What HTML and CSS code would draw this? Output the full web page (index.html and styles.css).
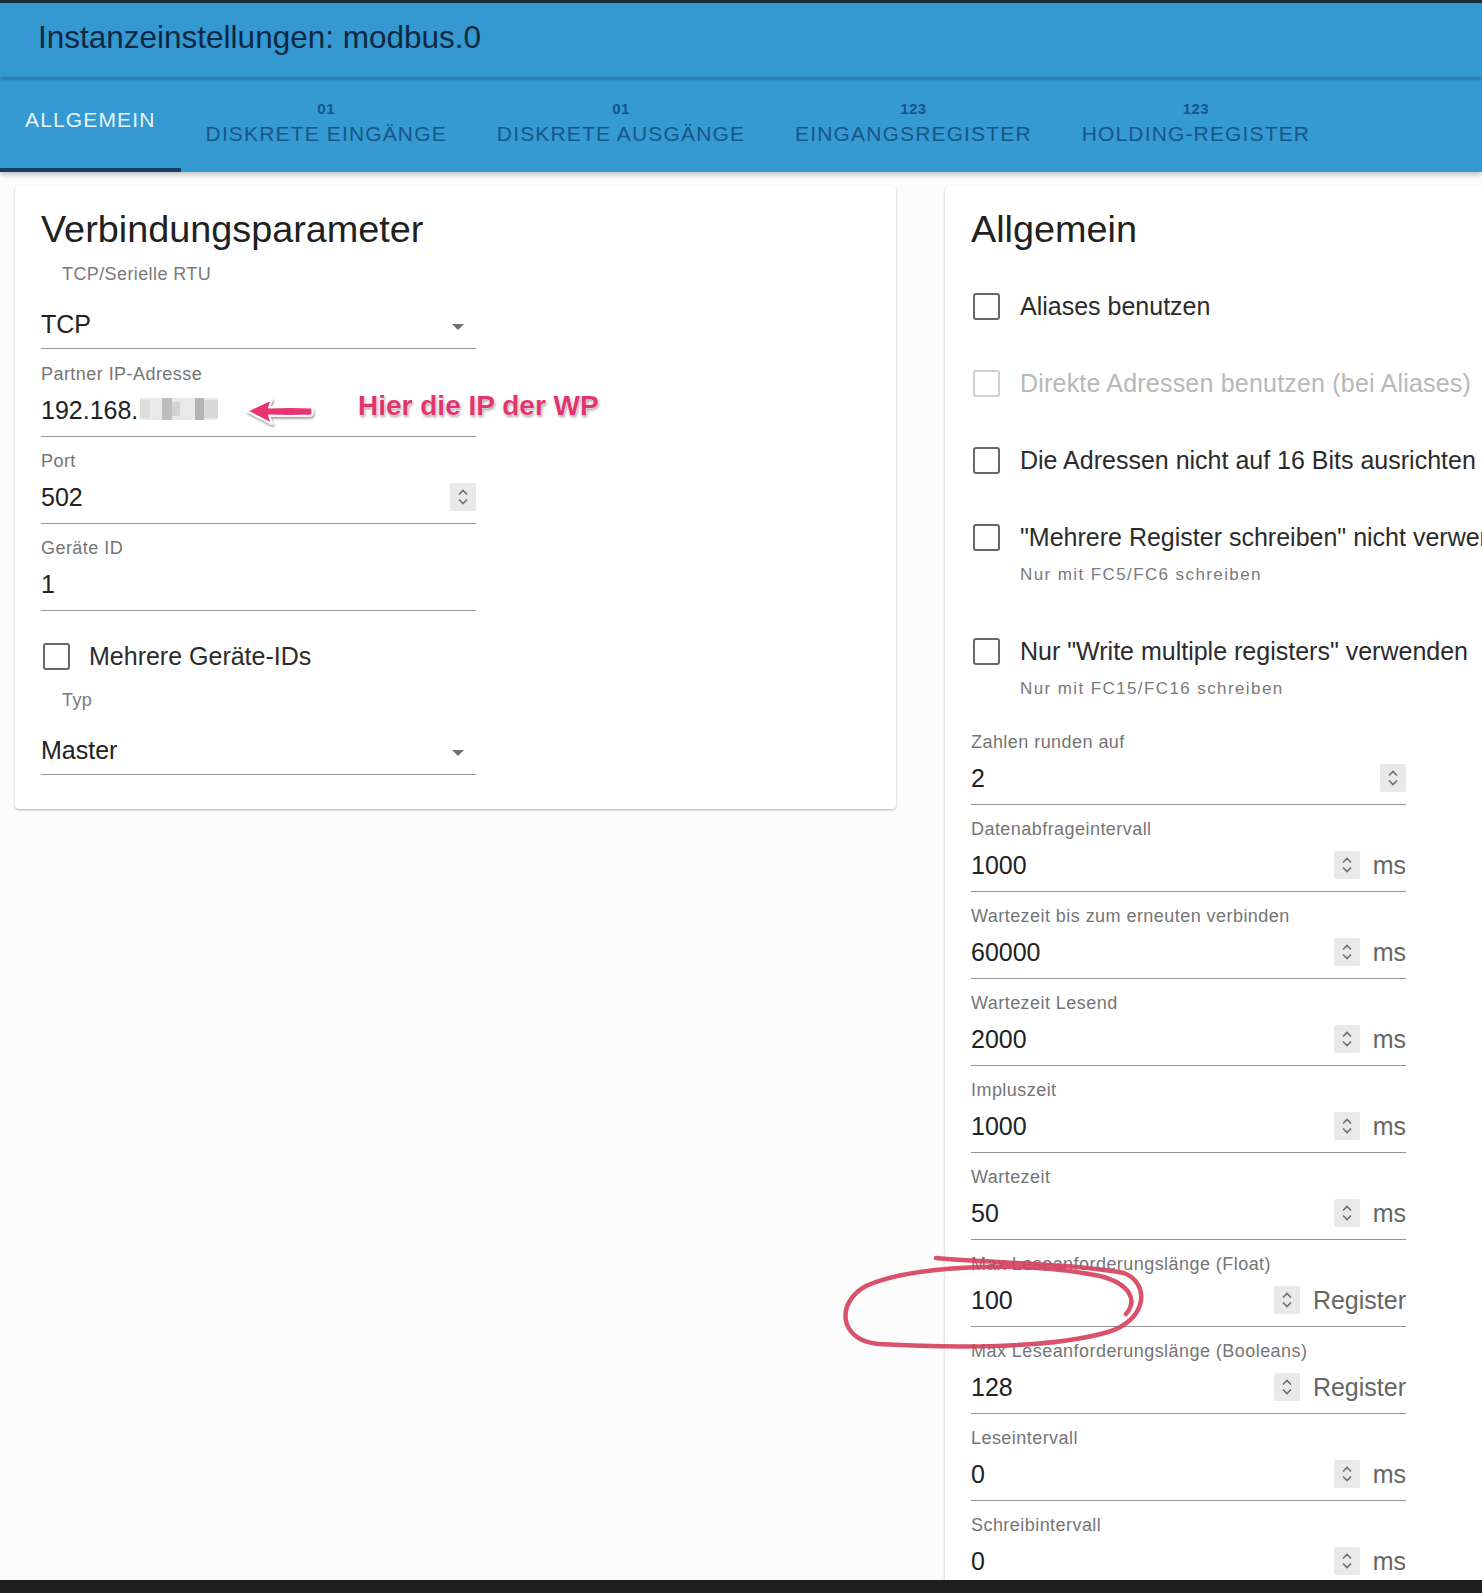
FILE: index.html
```html
<!DOCTYPE html>
<html lang="de">
<head>
<meta charset="utf-8">
<title>Instanzeinstellungen: modbus.0</title>
<link rel="stylesheet" href="styles.css">
</head>
<body>
<div class="topstrip"></div>
<header class="appbar"><h1 class="appbar-title">Instanzeinstellungen: modbus.0</h1></header>
<nav class="tabs">
  <div class="tab tab-active"><span class="tab-label">Allgemein</span></div>
  <div class="tab"><span class="tab-icon">01</span><span class="tab-label">Diskrete Eingänge</span></div>
  <div class="tab"><span class="tab-icon">01</span><span class="tab-label">Diskrete Ausgänge</span></div>
  <div class="tab"><span class="tab-icon">123</span><span class="tab-label">Eingangsregister</span></div>
  <div class="tab"><span class="tab-icon">123</span><span class="tab-label">Holding-Register</span></div>
</nav>
<main class="content">
  <section class="card">
    <h2 class="card-title">Verbindungsparameter</h2>
    <div class="select-field first">
      <div class="select-label">TCP/Serielle RTU</div>
      <div class="select-input"><span class="value">TCP</span><span class="caret"></span></div>
    </div>
    <div class="field">
      <div class="field-label">Partner IP-Adresse</div>
      <div class="field-input"><span class="value ip">192.168.</span><svg class="blurred" width="78" height="22" viewBox="0 0 78 22"><rect x="0" y="0" width="78" height="22" fill="#e9e9e9"/><rect x="0" y="2" width="10" height="18" fill="#dcdcdc"/><rect x="22" y="0" width="10" height="22" fill="#bdbdbd"/><rect x="32" y="4" width="8" height="14" fill="#d2d2d2"/><rect x="55" y="0" width="9" height="22" fill="#b4b4b4"/><rect x="64" y="2" width="14" height="18" fill="#d8d8d8"/></svg></div>
    </div>
    <div class="field">
      <div class="field-label">Port</div>
      <div class="field-input"><span class="value">502</span><span class="spin"><svg width="26" height="28" viewBox="0 0 26 28"><path d="M9 11.5 L13 7.5 L17 11.5 M9 16.5 L13 20.5 L17 16.5" fill="none" stroke="#6e6e6e" stroke-width="1.6"/></svg></span></div>
    </div>
    <div class="field">
      <div class="field-label">Geräte ID</div>
      <div class="field-input"><span class="value">1</span></div>
    </div>
    <div class="check-row left-check"><span class="checkbox"></span><span class="check-text">Mehrere Geräte-IDs</span></div>
    <div class="select-field typ">
      <div class="select-label">Typ</div>
      <div class="select-input"><span class="value">Master</span><span class="caret"></span></div>
    </div>
  </section>

  <section class="card">
    <h2 class="card-title">Allgemein</h2>
    <div class="check-list">
      <div class="check-item"><div class="check-row"><span class="checkbox"></span><span class="check-text">Aliases benutzen</span></div></div>
      <div class="check-item"><div class="check-row disabled"><span class="checkbox"></span><span class="check-text">Direkte Adressen benutzen (bei Aliases)</span></div></div>
      <div class="check-item"><div class="check-row"><span class="checkbox"></span><span class="check-text">Die Adressen nicht auf 16 Bits ausrichten</span></div></div>
      <div class="check-item with-helper"><div class="check-row"><span class="checkbox"></span><span class="check-text">"Mehrere Register schreiben" nicht verwenden</span></div><div class="helper">Nur mit FC5/FC6 schreiben</div></div>
      <div class="check-item with-helper"><div class="check-row"><span class="checkbox"></span><span class="check-text">Nur "Write multiple registers" verwenden</span></div><div class="helper">Nur mit FC15/FC16 schreiben</div></div>
    </div>
    <div class="field-list">
      <div class="field">
        <div class="field-label">Zahlen runden auf</div>
        <div class="field-input"><span class="value">2</span><span class="spin"><svg width="26" height="28" viewBox="0 0 26 28"><path d="M9 11.5 L13 7.5 L17 11.5 M9 16.5 L13 20.5 L17 16.5" fill="none" stroke="#6e6e6e" stroke-width="1.6"/></svg></span></div>
      </div>
      <div class="field">
        <div class="field-label">Datenabfrageintervall</div>
        <div class="field-input"><span class="value">1000</span><span class="spin"><svg width="26" height="28" viewBox="0 0 26 28"><path d="M9 11.5 L13 7.5 L17 11.5 M9 16.5 L13 20.5 L17 16.5" fill="none" stroke="#6e6e6e" stroke-width="1.6"/></svg></span><span class="unit">ms</span></div>
      </div>
      <div class="field">
        <div class="field-label">Wartezeit bis zum erneuten verbinden</div>
        <div class="field-input"><span class="value">60000</span><span class="spin"><svg width="26" height="28" viewBox="0 0 26 28"><path d="M9 11.5 L13 7.5 L17 11.5 M9 16.5 L13 20.5 L17 16.5" fill="none" stroke="#6e6e6e" stroke-width="1.6"/></svg></span><span class="unit">ms</span></div>
      </div>
      <div class="field">
        <div class="field-label">Wartezeit Lesend</div>
        <div class="field-input"><span class="value">2000</span><span class="spin"><svg width="26" height="28" viewBox="0 0 26 28"><path d="M9 11.5 L13 7.5 L17 11.5 M9 16.5 L13 20.5 L17 16.5" fill="none" stroke="#6e6e6e" stroke-width="1.6"/></svg></span><span class="unit">ms</span></div>
      </div>
      <div class="field">
        <div class="field-label">Impluszeit</div>
        <div class="field-input"><span class="value">1000</span><span class="spin"><svg width="26" height="28" viewBox="0 0 26 28"><path d="M9 11.5 L13 7.5 L17 11.5 M9 16.5 L13 20.5 L17 16.5" fill="none" stroke="#6e6e6e" stroke-width="1.6"/></svg></span><span class="unit">ms</span></div>
      </div>
      <div class="field">
        <div class="field-label">Wartezeit</div>
        <div class="field-input"><span class="value">50</span><span class="spin"><svg width="26" height="28" viewBox="0 0 26 28"><path d="M9 11.5 L13 7.5 L17 11.5 M9 16.5 L13 20.5 L17 16.5" fill="none" stroke="#6e6e6e" stroke-width="1.6"/></svg></span><span class="unit">ms</span></div>
      </div>
      <div class="field">
        <div class="field-label">Max Leseanforderungslänge (Float)</div>
        <div class="field-input"><span class="value">100</span><span class="spin"><svg width="26" height="28" viewBox="0 0 26 28"><path d="M9 11.5 L13 7.5 L17 11.5 M9 16.5 L13 20.5 L17 16.5" fill="none" stroke="#6e6e6e" stroke-width="1.6"/></svg></span><span class="unit">Register</span></div>
      </div>
      <div class="field">
        <div class="field-label">Max Leseanforderungslänge (Booleans)</div>
        <div class="field-input"><span class="value">128</span><span class="spin"><svg width="26" height="28" viewBox="0 0 26 28"><path d="M9 11.5 L13 7.5 L17 11.5 M9 16.5 L13 20.5 L17 16.5" fill="none" stroke="#6e6e6e" stroke-width="1.6"/></svg></span><span class="unit">Register</span></div>
      </div>
      <div class="field">
        <div class="field-label">Leseintervall</div>
        <div class="field-input"><span class="value">0</span><span class="spin"><svg width="26" height="28" viewBox="0 0 26 28"><path d="M9 11.5 L13 7.5 L17 11.5 M9 16.5 L13 20.5 L17 16.5" fill="none" stroke="#6e6e6e" stroke-width="1.6"/></svg></span><span class="unit">ms</span></div>
      </div>
      <div class="field">
        <div class="field-label">Schreibintervall</div>
        <div class="field-input"><span class="value">0</span><span class="spin"><svg width="26" height="28" viewBox="0 0 26 28"><path d="M9 11.5 L13 7.5 L17 11.5 M9 16.5 L13 20.5 L17 16.5" fill="none" stroke="#6e6e6e" stroke-width="1.6"/></svg></span><span class="unit">ms</span></div>
      </div>
    </div>
  </section>
</main>
<div class="bottombar"></div>

<div class="annotation">
  <svg class="anno-arrow" width="72" height="34" viewBox="0 0 72 34"><defs><filter id="sh" x="-20%" y="-40%" width="140%" height="180%"><feDropShadow dx="1" dy="2" stdDeviation="1.3" flood-color="#000" flood-opacity="0.4"/></filter></defs><path d="M3 16 L28 4 L25 12.5 C40 12 54 12 67 12.5 C69 13 69 20 67 20.5 C54 21 40 21 25 20.5 L28 29 Z" fill="#e8346f" stroke="#ffffff" stroke-width="2" stroke-linejoin="round" filter="url(#sh)"/></svg>
  <span class="anno-text">Hier die IP der WP</span>
</div>

<svg class="circle-mark" width="330" height="110" viewBox="830 1245 330 110"><path d="M936 1258 C990 1263 1070 1263 1124 1273 C1150 1283 1148 1320 1108 1332 C1050 1349 950 1348 878 1344 C838 1340 836 1302 866 1286 C910 1266 1020 1260 1100 1276 C1130 1284 1138 1300 1126 1314" fill="none" stroke="#d6435f" stroke-width="4.5" stroke-linecap="round" stroke-linejoin="round" opacity="0.92"/></svg>
</body>
</html>
```

FILE: styles.css
```css
* { box-sizing: border-box; }

html, body {
  margin: 0;
  padding: 0;
}

body {
  position: relative;
  width: 1482px;
  height: 1593px;
  overflow: hidden;
  display: flex;
  flex-direction: column;
  font-family: "Liberation Sans", Arial, Helvetica, sans-serif;
  background: #fcfcfc;
  color: #222;
}

.topstrip {
  height: 3px;
  flex: none;
  background: #1d2c39;
}

.appbar {
  flex: none;
  height: 74px;
  display: flex;
  align-items: center;
  padding: 0 0 4px 38px;
  background: #3498d1;
  position: relative;
  z-index: 3;
  box-shadow: 0 2px 4px rgba(0, 0, 0, 0.28);
}

.appbar-title {
  margin: 0;
  font-size: 31.5px;
  line-height: 1;
  font-weight: normal;
  color: #0d2841;
}

.tabs {
  flex: none;
  height: 95px;
  display: flex;
  background: #3599d2;
  position: relative;
  z-index: 2;
  box-shadow: 0 3px 5px rgba(0, 0, 0, 0.22);
}

.tab {
  padding: 0 25px;
  display: flex;
  flex-direction: column;
  align-items: center;
  justify-content: center;
  gap: 5px;
  color: #175787;
}

.tab-active {
  color: #e6f4fc;
  box-shadow: inset 0 -4px 0 #173f66;
  padding-bottom: 9px;
}

.tab-icon {
  font-size: 15px;
  line-height: 16px;
  font-weight: bold;
  letter-spacing: 0.5px;
}

.tab-label {
  font-size: 21px;
  line-height: 24px;
  letter-spacing: 1.15px;
  text-transform: uppercase;
}

.tab:not(.tab-active) { padding-bottom: 2px; }

.content {
  flex: 1 1 0;
  min-height: 0;
  overflow: hidden;
  display: grid;
  grid-template-columns: 881px 881px;
  column-gap: 49px;
  align-items: start;
  padding: 14px 0 0 15px;
}

.card {
  background: #fff;
  border-radius: 4px;
  box-shadow: 0 1px 3px rgba(0, 0, 0, 0.2), 0 1px 1px rgba(0, 0, 0, 0.1);
  padding: 21px 26px 34px 26px;
}

.card-title {
  margin: 0;
  font-size: 37.8px;
  line-height: 44px;
  font-weight: normal;
  color: #212121;
}

/* select fields */
.select-field {
  width: 435px;
}
.select-field.first { margin-top: 13px; }
.select-field.typ { margin-top: 13px; }

.select-label {
  padding-left: 21px;
  font-size: 18px;
  line-height: 20px;
  letter-spacing: 0.4px;
  color: #7a7a7a;
}

.select-input {
  margin-top: 22px;
  height: 43px;
  padding-bottom: 7px;
  border-bottom: 1px solid #949494;
  display: flex;
  align-items: center;
}

.caret {
  width: 0;
  height: 0;
  border-left: 6px solid transparent;
  border-right: 6px solid transparent;
  border-top: 6px solid #6f6f6f;
  margin: 6px 12px 0 0;
}

/* text fields */
.field {
  width: 435px;
  margin-top: 14px;
}
.select-field + .field { margin-top: 15px; }

.field-label {
  font-size: 18px;
  line-height: 20px;
  letter-spacing: 0.45px;
  color: #757575;
  white-space: nowrap;
}

.field-input {
  margin-top: 8px;
  height: 45px;
  padding-bottom: 8px;
  border-bottom: 1px solid #949494;
  display: flex;
  align-items: center;
}

.value {
  flex: 1;
  font-size: 25px;
  line-height: 36px;
  color: #222;
}

.value.ip { flex: none; }

.blurred {
  display: block;
  margin-left: 2px;
  margin-top: -2px;
  flex: none;
}

.spin {
  flex: none;
  width: 26px;
  height: 28px;
  background: #e9e9e9;
  border-radius: 2px;
  display: flex;
}

.unit {
  margin-left: 13px;
  font-size: 25px;
  line-height: 36px;
  color: #666;
}

/* checkboxes */
.check-row {
  height: 42px;
  display: flex;
  align-items: center;
  gap: 20px;
  white-space: nowrap;
}

.left-check {
  margin-top: 24px;
  gap: 19px;
}

.checkbox {
  flex: none;
  width: 27px;
  height: 27px;
  margin-left: 2px;
  border: 2.5px solid #676767;
  border-radius: 3px;
}

.check-text {
  font-size: 25px;
  line-height: 30px;
  color: #2b2b2b;
}

.check-row.disabled .checkbox { border-color: #cfcfcf; }
.check-row.disabled .check-text { color: #b8b8b8; letter-spacing: 0.2px; }

.check-list { margin-top: 34px; }
.check-item + .check-item { margin-top: 35px; }
.check-item.with-helper { padding-bottom: 10px; }

.helper {
  margin-top: 7px;
  padding-left: 49px;
  font-size: 17px;
  line-height: 20px;
  letter-spacing: 1.4px;
  color: #7a7a7a;
}

.field-list { margin-top: 23px; }

.bottombar {
  flex: none;
  height: 13px;
  background: #1f1f1f;
}

/* annotations drawn over the screenshot */
.annotation {
  position: absolute;
  left: 244px;
  top: 383px;
  display: flex;
  align-items: center;
  pointer-events: none;
}

.anno-arrow {
  display: block;
  margin-top: 12px;
}

.anno-text {
  margin-left: 42px;
  font-size: 28px;
  font-weight: bold;
  color: #e2346f;
  letter-spacing: 0;
  text-shadow: 0 0 1px #fff, 0 0 2px #fff, 1px 2px 3px rgba(0, 0, 0, 0.4);
}

.circle-mark {
  position: absolute;
  left: 830px;
  top: 1245px;
  pointer-events: none;
}
```
